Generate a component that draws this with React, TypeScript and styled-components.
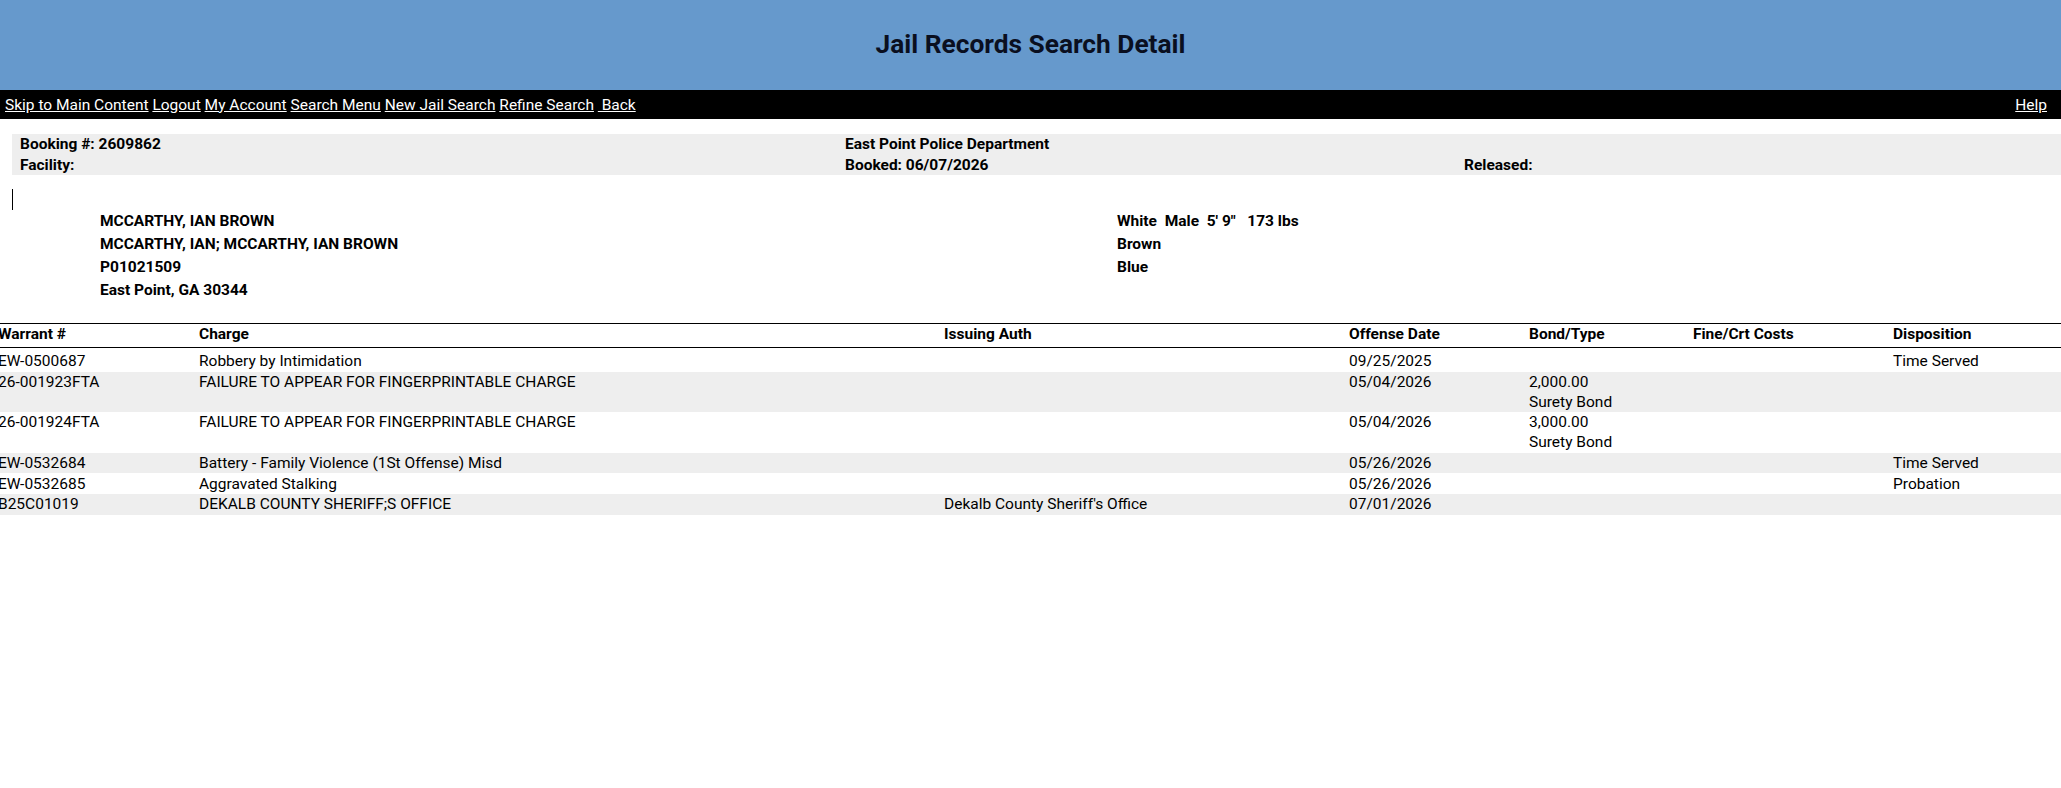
import React from 'react'
import styled, { createGlobalStyle } from 'styled-components'

type Charge = {
  warrant: string
  charge: string
  auth: string
  date: string
  bond: string[]
  fine: string
  disposition: string
}

const charges: Charge[] = [
  { warrant: 'EW-0500687', charge: 'Robbery by Intimidation', auth: '', date: '09/25/2025', bond: [], fine: '', disposition: 'Time Served' },
  { warrant: '26-001923FTA', charge: 'FAILURE TO APPEAR FOR FINGERPRINTABLE CHARGE', auth: '', date: '05/04/2026', bond: ['2,000.00', 'Surety Bond'], fine: '', disposition: '' },
  { warrant: '26-001924FTA', charge: 'FAILURE TO APPEAR FOR FINGERPRINTABLE CHARGE', auth: '', date: '05/04/2026', bond: ['3,000.00', 'Surety Bond'], fine: '', disposition: '' },
  { warrant: 'EW-0532684', charge: 'Battery - Family Violence (1St Offense) Misd', auth: '', date: '05/26/2026', bond: [], fine: '', disposition: 'Time Served' },
  { warrant: 'EW-0532685', charge: 'Aggravated Stalking', auth: '', date: '05/26/2026', bond: [], fine: '', disposition: 'Probation' },
  { warrant: 'B25C01019', charge: 'DEKALB COUNTY SHERIFF;S OFFICE', auth: "Dekalb County Sheriff's Office", date: '07/01/2026', bond: [], fine: '', disposition: '' },
]

const navLinks = ['Skip to Main Content', 'Logout', 'My Account', 'Search Menu', 'New Jail Search', 'Refine Search']

const App = () => (
  <>
    <GlobalStyle />
    <Banner>
      <Title>Jail Records Search Detail</Title>
    </Banner>
    <NavBar>
      <NavLinks>
        {navLinks.map((label, i) => (
          <React.Fragment key={label}>
            {i > 0 && ' '}
            <NavLink href="#">{label}</NavLink>
          </React.Fragment>
        ))}{' '}
        <NavLink href="#">{'\u00a0Back'}</NavLink>
      </NavLinks>
      <NavLink href="#">Help</NavLink>
    </NavBar>

    <InfoPanel>
      <InfoCell>Booking #: 2609862</InfoCell>
      <InfoCell>East Point Police Department</InfoCell>
      <InfoCell />
      <InfoCell>Facility:</InfoCell>
      <InfoCell>Booked: 06/07/2026</InfoCell>
      <InfoCell>Released:</InfoCell>
    </InfoPanel>

    <Caret />

    <Profile>
      <ProfileLine>MCCARTHY, IAN BROWN</ProfileLine>
      <ProfileLine>{'White\u00a0 Male\u00a0 5\' 9"\u00a0\u00a0 173 lbs'}</ProfileLine>
      <ProfileLine>MCCARTHY, IAN; MCCARTHY, IAN BROWN</ProfileLine>
      <ProfileLine>Brown</ProfileLine>
      <ProfileLine>P01021509</ProfileLine>
      <ProfileLine>Blue</ProfileLine>
      <ProfileLine>East Point, GA 30344</ProfileLine>
      <ProfileLine />
    </Profile>

    <ChargeTable>
      <HeaderRow>
        <HeadCell>Warrant #</HeadCell>
        <HeadCell>Charge</HeadCell>
        <HeadCell>Issuing Auth</HeadCell>
        <HeadCell>Offense Date</HeadCell>
        <HeadCell>Bond/Type</HeadCell>
        <HeadCell>Fine/Crt Costs</HeadCell>
        <HeadCell>Disposition</HeadCell>
      </HeaderRow>
      <TableBody>
        {charges.map((c, i) => (
          <DataRow key={c.warrant} $shaded={i % 2 === 1}>
            <Cell>{c.warrant}</Cell>
            <Cell>{c.charge}</Cell>
            <Cell>{c.auth}</Cell>
            <Cell>{c.date}</Cell>
            <Cell>
              {c.bond.map((b) => (
                <div key={b}>{b}</div>
              ))}
            </Cell>
            <Cell>{c.fine}</Cell>
            <Cell>{c.disposition}</Cell>
          </DataRow>
        ))}
      </TableBody>
    </ChargeTable>
  </>
)

export default App

const GlobalStyle = createGlobalStyle`
  html, body {
    margin: 0;
    padding: 0;
    background: #fff;
  }
  body {
    font-family: Roboto, 'Noto Sans', sans-serif;
    font-size: 15.5px;
    color: #000;
    overflow: hidden;
  }
`

const Banner = styled.header`
  height: 90px;
  background: #6699cc;
  display: flex;
  align-items: center;
  justify-content: center;
  padding-bottom: 3px;
  box-sizing: border-box;
`

const Title = styled.h1`
  margin: 0;
  font-size: 26.3px;
  font-weight: 700;
  color: #0a0f1f;
`

const NavBar = styled.nav`
  height: 29px;
  background: #000;
  display: flex;
  align-items: center;
  justify-content: space-between;
  padding: 0 14px 0 5px;
  color: #fff;
  white-space: pre;
`

const NavLinks = styled.div`
  white-space: pre;
`

const NavLink = styled.a`
  color: #fff;
  text-decoration: underline;
`

const InfoPanel = styled.section`
  margin: 15px 0 0 12px;
  padding-left: 8px;
  background: #eeeeee;
  display: grid;
  grid-template-columns: 825px 619px 1fr;
  font-weight: 700;
`

const InfoCell = styled.div`
  line-height: 20px;
  padding: 0.35px 0;
  min-height: 20px;
`

const Caret = styled.div`
  margin: 13.6px 0 0 12px;
  width: 1px;
  height: 21px;
  background: #000;
`

const Profile = styled.section`
  display: grid;
  grid-template-columns: 1017px 1fr;
  padding-left: 100px;
  font-weight: 700;
`

const ProfileLine = styled.div`
  height: 23px;
  line-height: 23px;
  white-space: pre;
`

const ChargeTable = styled.section`
  margin: 21.3px 0 0 -3px;
`

const columns = '201px 745px 405px 180px 164px 200px 1fr'

const HeaderRow = styled.div`
  display: grid;
  grid-template-columns: ${columns};
  border-top: 1px solid #000;
  border-bottom: 1px solid #000;
  font-weight: 700;
`

const HeadCell = styled.div`
  line-height: 20px;
  padding: 0.2px 1px 2.2px;
`

const TableBody = styled.div`
  padding-top: 3.3px;
`

const DataRow = styled.div<{ $shaded: boolean }>`
  display: grid;
  grid-template-columns: ${columns};
  background: ${(p) => (p.$shaded ? '#eeeeee' : 'transparent')};
`

const Cell = styled.div`
  line-height: 20px;
  padding: 0.3px 1px;
  white-space: nowrap;
`
